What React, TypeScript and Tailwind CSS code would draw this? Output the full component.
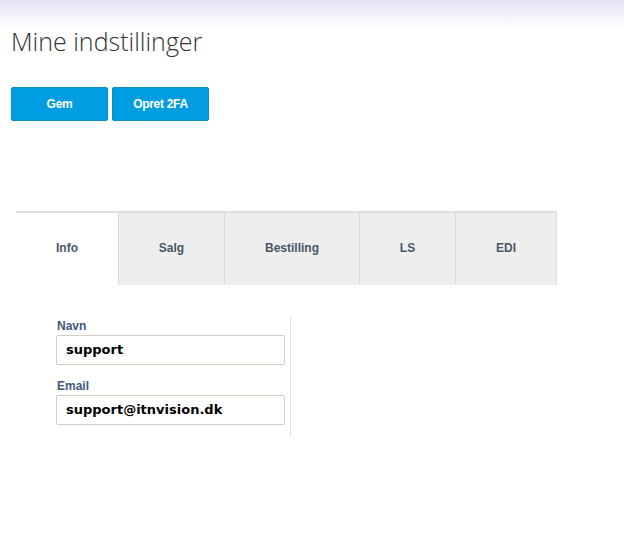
import React from "react";

const tabs = [
  { label: "Info", w: "w-[102px]", active: true },
  { label: "Salg", w: "w-[106px]" },
  { label: "Bestilling", w: "w-[135px]" },
  { label: "LS", w: "w-[96px]" },
  { label: "EDI", w: "w-[102px]" },
];

function Field({ label, value }: { label: string; value: string }) {
  return (
    <div className="flex flex-col">
      <label className="text-[12px] font-bold leading-[14px] text-[#40597a] pl-[1px] mb-[2px]">{label}</label>
      <div className="w-[229px] h-[30px] border border-[#cfcfc2] rounded-[2px] flex items-center pl-[9px] font-['DejaVu_Sans',Verdana,sans-serif] text-[13px] font-bold text-black">
        {value}
      </div>
    </div>
  );
}

export default function App() {
  return (
    <div className="w-[624px] h-[546px] bg-white relative font-['Liberation_Sans',Arial,sans-serif] overflow-hidden">
      <div className="absolute top-0 left-0 right-0 h-[28px] bg-gradient-to-b from-[#e3e3f3] to-white" />
      <div className="relative pt-[25px] pl-[11px]">
        <h1 className="font-['Open_Sans',sans-serif] font-light text-[25px] leading-[32px] text-[#333]">Mine indstillinger</h1>
        <div className="flex gap-[4px] mt-[30px]">
          <button className="w-[97px] h-[34px] bg-[#009ee0] border border-[#0a8cc4] rounded-[2px] text-white text-[12px] font-bold tracking-[-0.3px]">Gem</button>
          <button className="w-[97px] h-[34px] bg-[#009ee0] border border-[#0a8cc4] rounded-[2px] text-white text-[12px] font-bold tracking-[-0.3px]">Opret 2FA</button>
        </div>
      </div>

      <div className="ml-[16px] mt-[90px]">
        <div className="flex w-[541px] border-t-2 border-[#dedede]">
          {tabs.map((t, i) => (
            <div
              key={t.label}
              className={`${t.w} h-[72px] flex items-center justify-center pb-[2px] text-[12px] font-bold text-[#48576a] ${
                t.active ? "bg-white" : "bg-[#eeeeee] border-l border-[#dcdcdc]"
              } ${i === tabs.length - 1 ? "border-r" : ""}`}
            >
              {t.label}
            </div>
          ))}
        </div>

        <div className="mt-[32px] ml-[40px] flex">
          <div className="flex flex-col gap-[14px] pt-[2px] pr-[5px] pb-[12px]">
            <Field label="Navn" value="support" />
            <Field label="Email" value="support@itnvision.dk" />
          </div>
          <div className="w-px bg-[#e2e2e2]" />
        </div>
      </div>
    </div>
  );
}
